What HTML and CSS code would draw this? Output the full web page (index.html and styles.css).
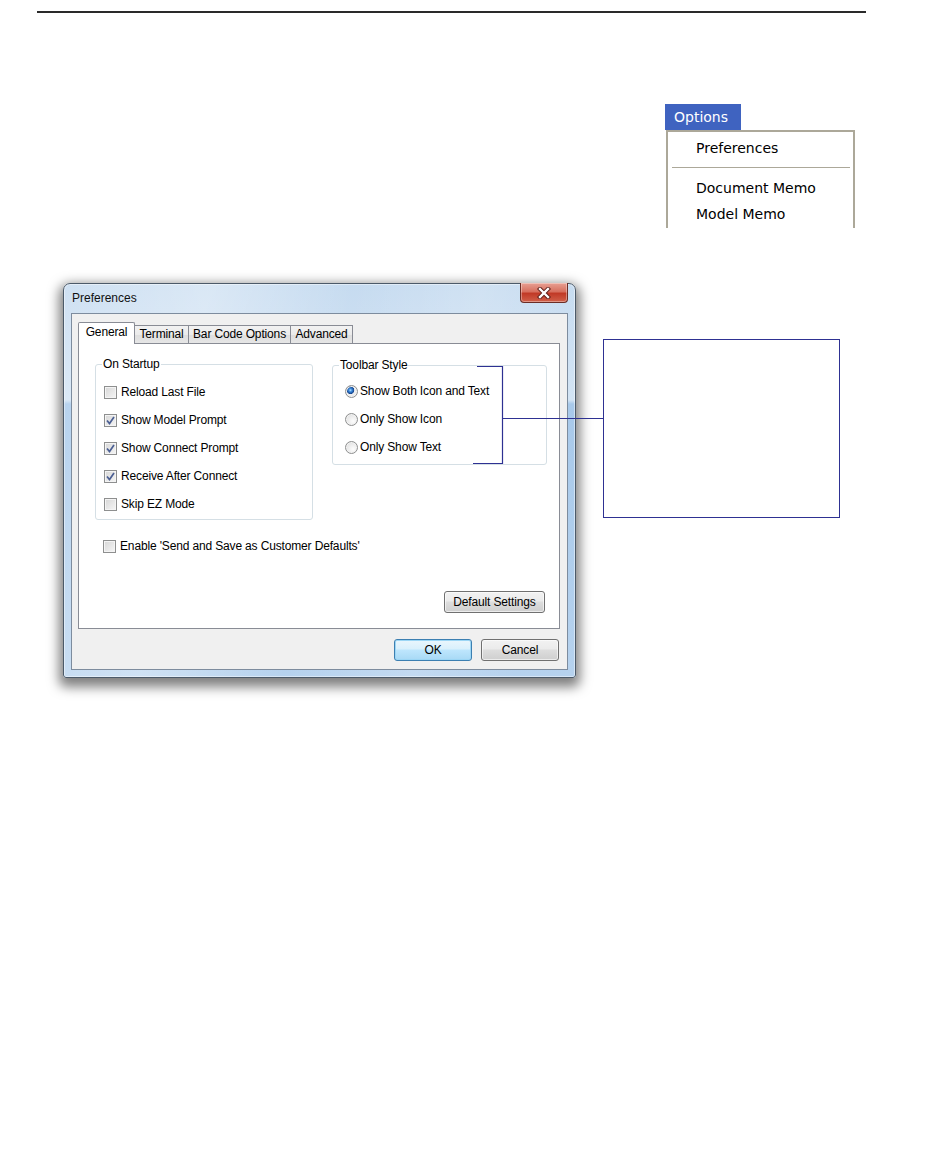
FILE: index.html
```html
<!DOCTYPE html>
<html lang="en">
<head>
  <meta charset="UTF-8">
  <meta name="viewport" content="width=device-width, initial-scale=1.0">
  <title>Preferences</title>
  <link rel="stylesheet" href="styles.css">
</head>
<body>
  <div class="rule"></div>

  <!-- cropped menu shot -->
  <div class="menu-row">
    <div class="menu-shot">
      <div class="menu-title">Options</div>
      <div class="menu-list">
        <div class="menu-item first">Preferences</div>
        <div class="menu-sep"></div>
        <div class="menu-item">Document Memo</div>
        <div class="menu-item">Model Memo</div>
      </div>
    </div>
  </div>

  <div class="figure">
    <div class="window">
      <div class="titlebar">
        <span class="title">Preferences</span>
        <div class="close">
          <svg width="14" height="12" viewBox="0 0 14 12">
            <path d="M3 2 L11 10 M11 2 L3 10" stroke="#5a1a14" stroke-width="4.2" stroke-linecap="square"/>
            <path d="M3 2 L11 10 M11 2 L3 10" stroke="#fff" stroke-width="2.4" stroke-linecap="square"/>
          </svg>
        </div>
      </div>

      <div class="client">
        <div class="tabs">
          <div class="tab active general">General</div>
          <div class="tab terminal">Terminal</div>
          <div class="tab barcode">Bar Code Options</div>
          <div class="tab advanced">Advanced</div>
        </div>

        <div class="panel">
          <div class="groups">
            <fieldset class="group startup">
              <legend>On Startup</legend>
              <div class="check"><span class="box"></span>Reload Last File</div>
              <div class="check"><span class="box checked"><svg width="11" height="11" viewBox="0 0 11 11"><path d="M2 5.5 L4.5 8.5 L9 2" fill="none" stroke="#4b5f93" stroke-width="1.7"/></svg></span>Show Model Prompt</div>
              <div class="check"><span class="box checked"><svg width="11" height="11" viewBox="0 0 11 11"><path d="M2 5.5 L4.5 8.5 L9 2" fill="none" stroke="#4b5f93" stroke-width="1.7"/></svg></span>Show Connect Prompt</div>
              <div class="check"><span class="box checked"><svg width="11" height="11" viewBox="0 0 11 11"><path d="M2 5.5 L4.5 8.5 L9 2" fill="none" stroke="#4b5f93" stroke-width="1.7"/></svg></span>Receive After Connect</div>
              <div class="check"><span class="box"></span>Skip EZ Mode</div>
            </fieldset>

            <fieldset class="group toolbar">
              <legend>Toolbar Style</legend>
              <div class="check radio-row"><span class="radio selected"></span>Show Both Icon and Text</div>
              <div class="check radio-row"><span class="radio"></span>Only Show Icon</div>
              <div class="check radio-row"><span class="radio"></span>Only Show Text</div>
            </fieldset>
          </div>

          <div class="check enable"><span class="box"></span>Enable 'Send and Save as Customer Defaults'</div>

          <div class="panel-foot">
            <button class="btn wide">Default Settings</button>
          </div>
        </div>

        <div class="buttons">
          <button class="btn default">OK</button>
          <button class="btn">Cancel</button>
        </div>
      </div>
    </div>

    <div class="callout"></div>

    <!-- annotation bracket over the dialog -->
    <svg class="bracket" width="140" height="105" viewBox="0 0 140 105">
      <path d="M7 3.5 H32.5 V100.5 H3 M32.5 55.5 H134" fill="none" stroke="#2e3192" stroke-width="1.2"/>
    </svg>
  </div>
</body>
</html>
```

FILE: styles.css
```css
* {
  box-sizing: border-box;
}
body {
  margin: 0;
  min-height: 1100px;
  background: #fff;
  font-family: "Liberation Sans", Arial, sans-serif;
  color: #000;
}
.rule {
  margin: 11px 0 0 37px;
  width: 829px;
  height: 2px;
  background: #2a2a2a;
}

/* Options menu */
.menu-row {
  margin-top: 91px;
  padding-left: 665px;
}
.menu-shot {
  width: 190px;
  height: 124px;
  overflow: hidden;
  font-family: "DejaVu Sans", Verdana, sans-serif;
  font-size: 14px;
}
.menu-title {
  width: 76px;
  height: 26px;
  line-height: 26px;
  padding-left: 9px;
  background: #3f63c0;
  color: #fff;
}
.menu-list {
  margin-left: 1px;
  width: 189px;
  height: 120px;
  border: 2px solid #aca899;
  border-bottom: none;
  background: #fff;
}
.menu-item {
  height: 26px;
  line-height: 26px;
  padding-left: 28px;
}
.menu-item.first {
  margin-top: 3px;
}
.menu-sep {
  height: 1px;
  margin: 6px 3px 7px 4px;
  background: #aca899;
}

/* dialog figure */
.figure {
  position: relative;
  display: flex;
  align-items: flex-start;
  margin-top: 55px;
  padding-left: 63px;
  padding-bottom: 30px;
}
.window {
  width: 513px;
  height: 395px;
  padding: 0 7px 7px;
  border: 1px solid #4c5a69;
  border-radius: 7px 7px 3px 3px;
  background:
    linear-gradient(100deg, rgba(255,255,255,0.15) 0%, rgba(255,255,255,0.35) 25%, rgba(255,255,255,0) 50%, rgba(255,255,255,0.18) 72%, rgba(255,255,255,0) 90%),
    linear-gradient(to bottom, #c6dbf0 0, #d3e4f4 116px, #a8c9ea 120px, #b6d2ee 100%);
  box-shadow: inset 0 0 0 1px rgba(255,255,255,0.45), 0 5px 12px 4px rgba(0,0,0,0.5);
}
.titlebar {
  display: flex;
  align-items: flex-start;
  height: 29px;
}
.title {
  margin-left: 1px;
  line-height: 28px;
  font-size: 12px;
  color: #111;
}
.close {
  display: flex;
  align-items: center;
  justify-content: center;
  margin-left: auto;
  margin-top: -1px;
  width: 48px;
  height: 20px;
  border: 1px solid #6b2c25;
  border-top: none;
  border-radius: 0 0 4px 4px;
  background: linear-gradient(to bottom, #e8a093 0%, #d7705f 45%, #c13a27 55%, #d0604a 100%);
  box-shadow: inset 0 0 0 1px rgba(255,255,255,0.35);
}
.client {
  height: 357px;
  padding: 8px 7px 0 6px;
  border: 1px solid #7d8c9e;
  background: #f0f0f0;
  font-size: 12px;
  letter-spacing: -0.15px;
}

/* tabs */
.tabs {
  position: relative;
  z-index: 1;
  display: flex;
  align-items: flex-end;
  height: 21px;
}
.tab {
  height: 18px;
  line-height: 17px;
  margin-left: -1px;
  text-align: center;
  border: 1px solid #898c95;
  border-bottom: none;
  background: linear-gradient(to bottom, #f2f2f2, #ebebeb 50%, #dedede 50%, #e6e6e6);
}
.tab.active {
  height: 22px;
  line-height: 19px;
  margin-left: 0;
  margin-bottom: -1px;
  background: #fff;
  border-radius: 2px 2px 0 0;
}
.general { width: 57px; }
.terminal { width: 55px; }
.barcode { width: 103px; }
.advanced { width: 63px; }

.panel {
  height: 286px;
  padding: 13px 0 0 16px;
  border: 1px solid #898c95;
  background: #fff;
}
.groups {
  display: flex;
  align-items: flex-start;
}
.group {
  margin: 0;
  padding: 7px 0 1px 8px;
  min-width: 0;
  border: 1px solid #d5dfe5;
  border-radius: 3px;
}
.group legend {
  padding: 0 1px;
  margin-left: -2px;
  line-height: 14px;
}
.startup {
  width: 218px;
}
.toolbar {
  width: 215px;
  margin-left: 19px;
  margin-top: 1px;
  padding: 5px 0 3px 12px;
}
.toolbar legend {
  margin-left: -6px;
}

.check {
  display: flex;
  align-items: center;
  height: 28px;
  gap: 4px;
  white-space: nowrap;
}
.radio-row {
  gap: 2px;
}
.box {
  display: flex;
  align-items: center;
  justify-content: center;
  width: 13px;
  height: 13px;
  border: 1px solid #8e8f8f;
  background: linear-gradient(135deg, #d6d6d6, #f6f6f6);
  box-shadow: inset 0 0 0 1px #f4f4f4;
}
.box svg {
  display: block;
}
.radio {
  width: 13px;
  height: 13px;
  border: 1px solid #8e8f8f;
  border-radius: 50%;
  background: radial-gradient(circle at 65% 65%, #fdfdfd, #d9d9d9);
  box-shadow: inset 0 0 0 1px #f2f2f2;
}
.radio.selected {
  background: radial-gradient(circle at 40% 38%, #b8e2ff 0, #3e8ee0 1.5px, #15458f 3.5px, #f0f0f0 4.2px, #dcdcdc 100%);
}
.enable {
  margin: 12px 0 0 8px;
}
.panel-foot {
  display: flex;
  justify-content: flex-end;
  margin: 31px 14px 0 0;
}

/* buttons */
.btn {
  height: 22px;
  width: 78px;
  padding: 0;
  font-family: "Liberation Sans", Arial, sans-serif;
  font-size: 12px;
  letter-spacing: -0.15px;
  color: #000;
  border: 1px solid #707070;
  border-radius: 3px;
  background: linear-gradient(to bottom, #f2f2f2, #ebebeb 45%, #dddddd 50%, #cfcfcf);
  box-shadow: inset 0 0 0 1px rgba(255,255,255,0.6);
}
.btn.wide {
  width: 101px;
}
.btn.default {
  border-color: #3c7fb1;
  background: linear-gradient(to bottom, #eaf6fd, #d9f0fc 45%, #bee6fd 50%, #a7d9f5);
  box-shadow: inset 0 0 0 1px #9cd6f5;
}
.buttons {
  display: flex;
  justify-content: flex-end;
  gap: 9px;
  margin: 10px 1px 0 0;
}

/* annotation */
.callout {
  width: 237px;
  height: 179px;
  margin: 56px 0 0 27px;
  border: 1px solid #2e3192;
}
.bracket {
  position: absolute;
  left: 470px;
  top: 80px;
}
```
